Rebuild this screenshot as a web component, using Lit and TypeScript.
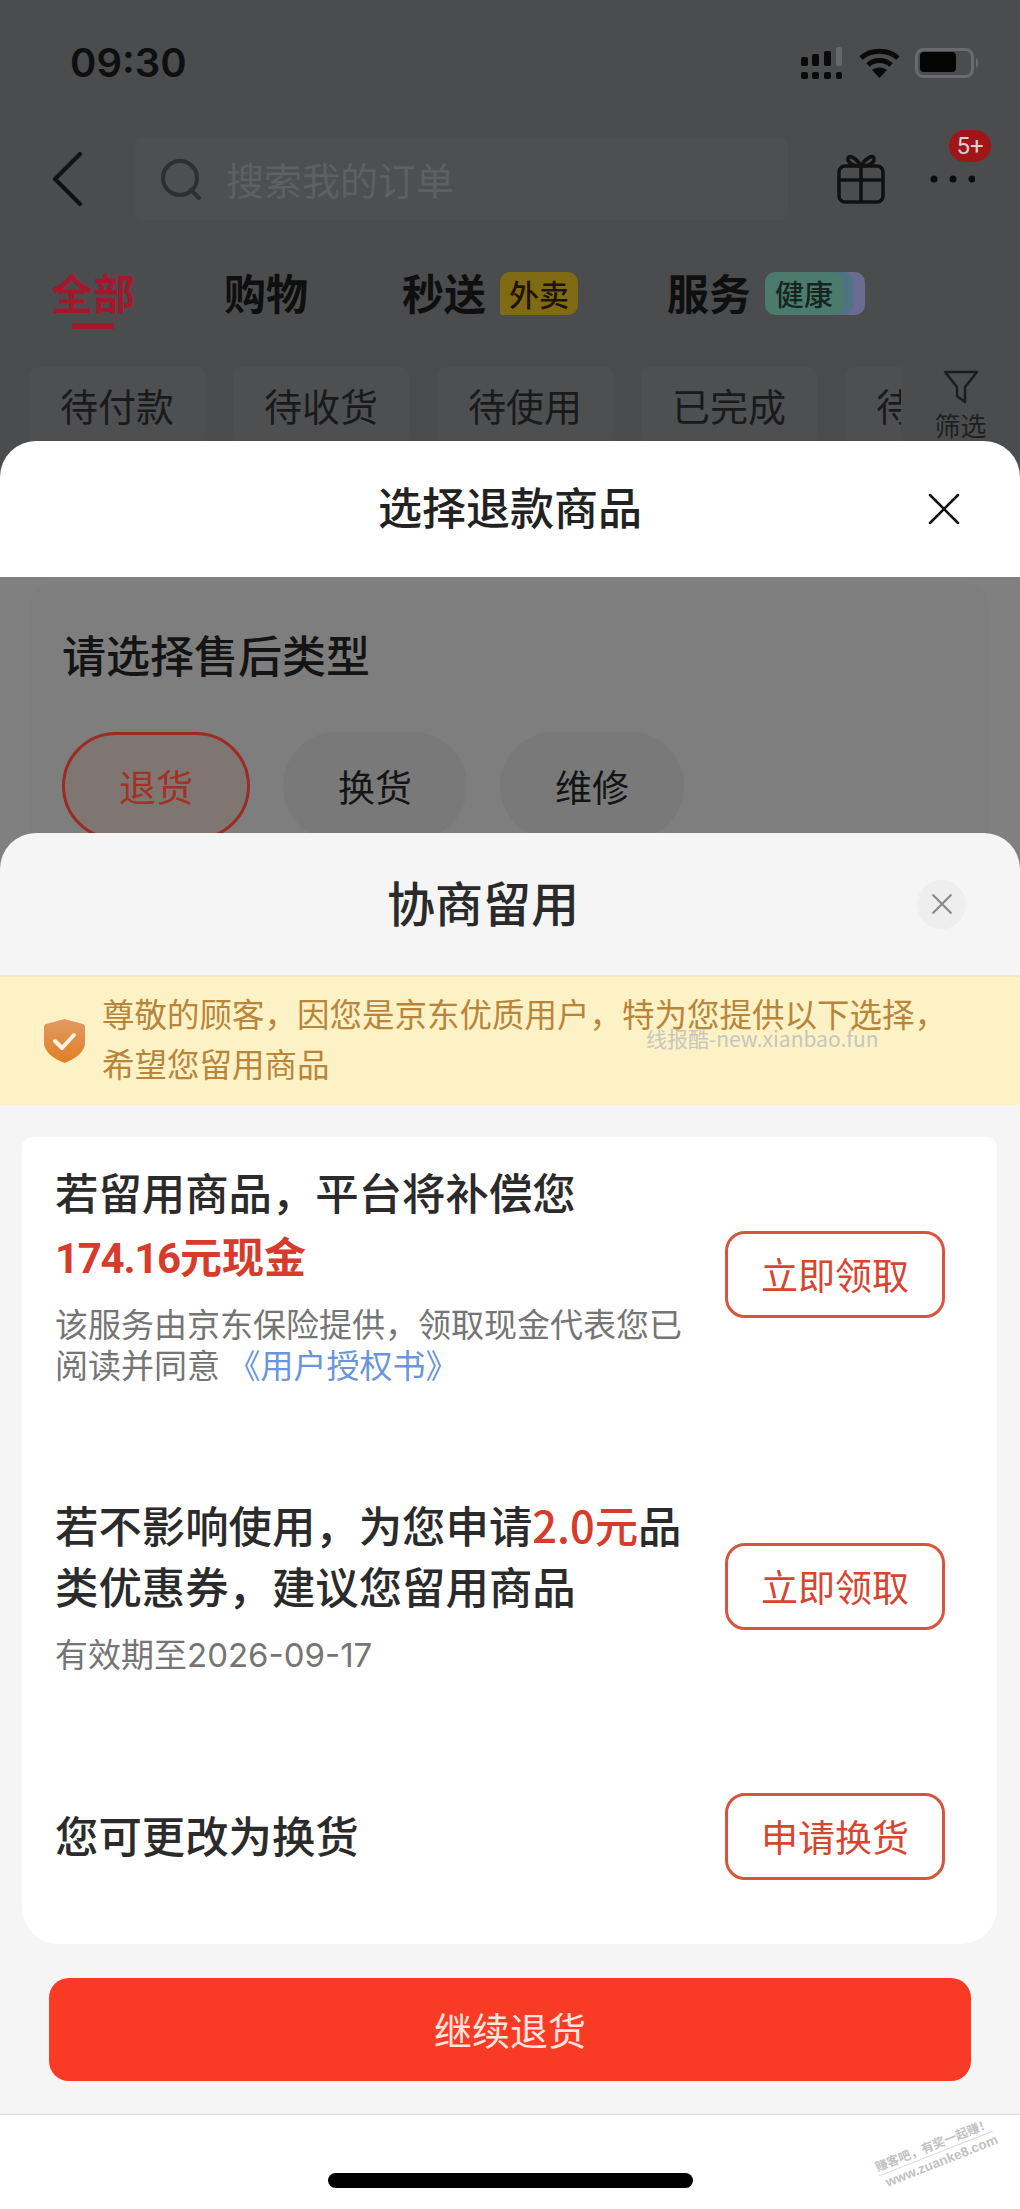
import { LitElement, html, css } from 'lit';
import { customElement } from 'lit/decorators.js';

const closeIcon = (size: number, stroke: string, width: number) => html`
  <svg width=${size} height=${size} viewBox="0 0 32 32" fill="none" stroke=${stroke} stroke-width=${width} stroke-linecap="round">
    <path d="M2 2 L30 30 M30 2 L2 30"></path>
  </svg>
`;

@customElement('app-root')
export class AppRoot extends LitElement {
  static styles = css`
    :host {
      display: block;
      width: 1020px;
      height: 2209px;
      overflow: hidden;
      background: #fff;
      font-family: "Noto Sans CJK SC", "Liberation Sans", sans-serif;
      color: #2b2b2b;
    }

    /* dimmed order list behind the sheets */
    .behind {
      height: 477px;
      overflow: hidden;
      background: #4b4c4e;
      color: #0f0f0f;
    }
    .status {
      display: flex;
      align-items: center;
      height: 38px;
      padding: 44px 39px 0 70px;
    }
    .time {
      font: 600 40px/38px Inter, sans-serif;
    }
    .status-icons {
      margin-left: auto;
      display: flex;
      align-items: center;
      gap: 15px;
    }
    .nav {
      display: flex;
      align-items: center;
      height: 82px;
      margin-top: 56px;
      padding-left: 52px;
    }
    .search {
      display: flex;
      align-items: center;
      gap: 24px;
      width: 654px;
      height: 82px;
      margin-left: 52px;
      padding-left: 26px;
      box-sizing: border-box;
      background: #4e4f51;
      border-radius: 8px;
      color: #5f6062;
      font-size: 38px;
      line-height: 50px;
    }
    .gift {
      margin-left: 49px;
    }
    .more {
      position: relative;
      margin-left: 44px;
      display: flex;
    }
    .badge {
      position: absolute;
      left: 20px;
      top: -44px;
      width: 42px;
      height: 32px;
      border-radius: 16px;
      background: #a01518;
      color: #d8d0d0;
      font: 24px/32px Roboto, sans-serif;
      text-align: center;
    }
    .tabs {
      display: flex;
      gap: 89px;
      height: 60px;
      margin-top: 50px;
      padding-left: 51px;
      font-size: 42px;
      font-weight: 700;
      line-height: 44px;
    }
    .tab {
      display: flex;
      align-items: flex-start;
    }
    .tab.shift {
      margin-left: 5px;
    }
    .tab.active {
      flex-direction: column;
      align-items: center;
      color: #a3182c;
    }
    .tab.active::after {
      content: "";
      width: 42px;
      height: 6px;
      margin-top: 9px;
      background: #a3182c;
    }
    .tag {
      height: 43px;
      margin-left: 14px;
      margin-top: 2px;
      border-radius: 10px 10px 10px 2px;
      font-size: 30px;
      line-height: 43px;
      font-weight: 500;
      text-align: center;
    }
    .tag.food {
      width: 78px;
      background: #806b14;
      color: #20140a;
    }
    .tag.health {
      width: 78px;
      background: #4c7a6c;
      color: #14261f;
      box-shadow: 10px 0 0 #4d7385, 22px 0 0 #6b6a90;
      border-radius: 10px;
      font-size: 29px;
    }
    .chips-wrap {
      position: relative;
      margin-top: 37px;
    }
    .chips {
      display: flex;
      gap: 28px;
      padding-left: 29px;
      overflow: hidden;
    }
    .chip {
      flex: none;
      width: 176px;
      height: 76px;
      background: #4e4f51;
      border-radius: 8px;
      font-size: 38px;
      line-height: 76px;
      padding-left: 31px;
      box-sizing: border-box;
      color: #1a1a1a;
      white-space: nowrap;
    }
    .filter {
      position: absolute;
      right: 0;
      top: 0;
      width: 119px;
      height: 90px;
      background: #4b4c4e;
      display: flex;
      flex-direction: column;
      align-items: center;
      color: #1f1f1f;
      font-size: 26px;
      line-height: 30px;
      padding-top: 3px;
      gap: 6px;
      box-sizing: border-box;
    }

    /* first sheet */
    .sheet {
      position: relative;
      margin-top: -36px;
      border-radius: 36px 36px 0 0;
    }
    .sheet-head {
      display: grid;
      grid-template-columns: 1fr auto 1fr;
      align-items: center;
      height: 136px;
      background: #fff;
    }
    .sheet-head h1 {
      margin: 0;
      padding-bottom: 6px;
      font-size: 44px;
      line-height: 60px;
      font-weight: 500;
      color: #222;
    }
    .sheet-head .close {
      justify-self: end;
      display: flex;
      margin-right: 60px;
    }
    .types {
      height: 292px;
      overflow: hidden;
      box-sizing: border-box;
      background: #808080;
      padding: 6px 31px 0 29px;
    }
    .types-card {
      height: 400px;
      padding: 45px 33px 0;
      background: #7e7e7e;
      border-radius: 24px;
      box-sizing: border-box;
      color: #141414;
    }
    .types-card h2 {
      margin: 0 0 52px;
      font-size: 44px;
      line-height: 52px;
      font-weight: 500;
    }
    .pills {
      display: flex;
      gap: 33px;
    }
    .pill {
      width: 184px;
      height: 108px;
      border-radius: 54px;
      background: #797979;
      font-size: 37px;
      line-height: 108px;
      text-align: center;
      box-sizing: border-box;
    }
    .pill.on {
      width: 188px;
      line-height: 102px;
      background: #7f7672;
      border: 3px solid #9a2c22;
      color: #a13226;
    }

    /* second sheet */
    .offer {
      background: #f5f5f5;
    }
    .offer-head {
      display: flex;
      align-items: center;
      height: 142px;
      padding: 0 54px 0 387px;
    }
    .offer-head h1 {
      margin: 0;
      padding-bottom: 6px;
      font-size: 48px;
      line-height: 60px;
      font-weight: 500;
      color: #2a2a2a;
    }
    .offer-close {
      margin-left: auto;
      width: 49px;
      height: 49px;
      border-radius: 50%;
      background: #eeeeee;
      display: flex;
      align-items: center;
      justify-content: center;
    }
    .notice {
      position: relative;
      display: flex;
      align-items: center;
      gap: 17px;
      height: 130px;
      padding-left: 44px;
      background: #fdf2c6;
      border-top: 2px solid #f7e8c0;
      box-sizing: border-box;
      color: #b8853a;
      font-size: 32.5px;
      line-height: 50px;
    }
    .notice-text {
      white-space: nowrap;
      padding-bottom: 7px;
    }
    .mark {
      position: absolute;
      left: 646px;
      top: 46px;
      color: #c8c6bc;
      font: 21px/30px "Noto Sans CJK SC", sans-serif;
      white-space: nowrap;
    }
    .card {
      margin: 32px 23px 0 22px;
      height: 807px;
      padding: 25px 52px 0 33px;
      box-sizing: border-box;
      background: #fff;
      border-radius: 10px 10px 36px 36px;
      display: flex;
      flex-direction: column;
    }
    .row {
      display: flex;
      align-items: center;
      justify-content: space-between;
    }
    .row + .row {
      margin-top: 109px;
    }
    .row.last {
      margin-top: 117px;
    }
    .row-text {
      margin: -2px 0 2px;
    }
    .row-title {
      font-size: 43.4px;
      line-height: 63px;
      font-weight: 500;
      white-space: nowrap;
    }
    .row-title.tight {
      line-height: 61px;
    }
    .red {
      color: #d63b2b;
    }
    .amount {
      font-size: 42px;
      line-height: 63px;
      font-weight: 700;
    }
    .money {
      font-family: Roboto, sans-serif;
      letter-spacing: -1.3px;
      line-height: 1;
    }
    .sub {
      margin-top: 17px;
      color: #757575;
      font-size: 33px;
      line-height: 41px;
      white-space: nowrap;
    }
    .date {
      font-family: Inter, sans-serif;
      line-height: 1;
    }
    .link {
      color: #6a95d8;
    }
    .btn {
      flex: none;
      width: 220px;
      height: 87px;
      border: 3px solid #d9533f;
      border-radius: 20px;
      box-sizing: border-box;
      background: #fff;
      color: #d9442f;
      font-size: 37px;
      line-height: 81px;
      text-align: center;
    }
    .continue {
      margin: 34px 49px 0;
      height: 103px;
      border-radius: 20px;
      background: #f93b26;
      color: #fde4dc;
      font-size: 38px;
      line-height: 101px;
      text-align: center;
    }
    .offer-bottom {
      height: 33px;
    }
    .footer {
      position: relative;
      height: 92px;
      padding-top: 58px;
      background: #fff;
      border-top: 1px solid #dcdcdc;
    }
    .home {
      width: 365px;
      height: 15px;
      margin-left: 328px;
      border-radius: 8px;
      background: #000;
    }
    .stamp {
      position: absolute;
      left: 875px;
      top: 21px;
      width: 122px;
      color: #c2c2c2;
      transform: rotate(-21.5deg);
      white-space: nowrap;
    }
    .stamp-top {
      font-size: 12.3px;
      line-height: 17px;
      font-weight: 700;
      border-bottom: 1px solid #d8d8d8;
    }
    .stamp-bottom {
      font: 700 13.5px/18px "Liberation Sans", sans-serif;
      padding-left: 4px;
    }
  `;

  private statusIcons() {
    return html`
      <svg width="44" height="32" viewBox="0 0 44 32" fill="#0a0a0a">
        <rect x="1" y="10" width="7" height="9" rx="2"></rect>
        <rect x="12" y="7" width="7" height="12" rx="2"></rect>
        <rect x="24" y="4" width="7" height="15" rx="2"></rect>
        <rect x="36" y="0" width="6" height="19" rx="2" fill="#66676a"></rect>
        <rect x="1" y="25" width="7" height="7" rx="2"></rect>
        <rect x="12" y="25" width="7" height="7" rx="2"></rect>
        <rect x="24" y="25" width="7" height="7" rx="2"></rect>
        <rect x="36" y="25" width="6" height="7" rx="2"></rect>
      </svg>
      <svg width="41" height="30" viewBox="0 0 41 30" fill="none" stroke="#0a0a0a" stroke-width="5">
        <path d="M2 10 C12 1 29 1 39 10"></path>
        <path d="M9 17 C15 11 26 11 32 17"></path>
        <path d="M20.5 30 L13 22 C17 18.500 24 18.500 28 22 Z" fill="#0a0a0a" stroke="none"></path>
      </svg>
      <svg width="66" height="30" viewBox="0 0 66 30">
        <rect x="1.500" y="1.500" width="56" height="27" rx="7" fill="none" stroke="#6a6b6e" stroke-width="3"></rect>
        <rect x="5" y="4" width="36" height="20" rx="4" fill="#050505"></rect>
        <path d="M61 10 C64 11 64 19 61 20 Z" fill="#6a6b6e"></path>
      </svg>
    `;
  }

  private behind() {
    return html`
      <div class="behind">
        <div class="status">
          <div class="time">09:30</div>
          <div class="status-icons">${this.statusIcons()}</div>
        </div>
        <div class="nav">
          <svg width="30" height="54" viewBox="0 0 30 54" fill="none" stroke="#111" stroke-width="4" stroke-linecap="round" stroke-linejoin="round">
            <path d="M28 2 L3 27 L28 52"></path>
          </svg>
          <div class="search">
            <svg width="42" height="42" viewBox="0 0 42 42" fill="none" stroke="#2e2f30" stroke-width="4" stroke-linecap="round">
              <circle cx="20" cy="20" r="17"></circle>
              <path d="M31 32 L39 40"></path>
            </svg>
            <span>搜索我的订单</span>
          </div>
          <svg class="gift" width="48" height="50" viewBox="0 0 48 50" fill="none" stroke="#111" stroke-width="3.500" stroke-linejoin="round">
            <rect x="2" y="12" width="44" height="36" rx="6"></rect>
            <path d="M2 26 H46 M24 12 V48"></path>
            <path d="M24 12 C18 2 10 0 11 6 C12 10 18 12 24 12 C30 12 36 10 37 6 C38 0 30 2 24 12 Z"></path>
          </svg>
          <div class="more">
            <svg width="46" height="10" viewBox="0 0 46 10" fill="#0c0c0c">
              <circle cx="5" cy="5" r="3.500"></circle>
              <circle cx="24" cy="5" r="3.500"></circle>
              <circle cx="43" cy="5" r="3.500"></circle>
            </svg>
            <div class="badge">5+</div>
          </div>
        </div>
        <div class="tabs">
          <div class="tab active">全部</div>
          <div class="tab">购物</div>
          <div class="tab shift">秒送<div class="tag food">外卖</div></div>
          <div class="tab">服务<div class="tag health">健康</div></div>
        </div>
        <div class="chips-wrap">
          <div class="chips">
            ${['待付款', '待收货', '待使用', '已完成', '待评价'].map((c) => html`<div class="chip">${c}</div>`)}
          </div>
          <div class="filter">
            <svg width="36" height="34" viewBox="0 0 36 34" fill="none" stroke="#1c1c1c" stroke-width="2.500" stroke-linejoin="round">
              <path d="M2 2 H34 L22 17 V32 L14 26 V17 Z"></path>
            </svg>
            <span>筛选</span>
          </div>
        </div>
      </div>
    `;
  }

  private types() {
    return html`
      <div class="sheet sheet-head">
        <span></span>
        <h1>选择退款商品</h1>
        <div class="close">${closeIcon(32, '#111', 2.5)}</div>
      </div>
      <div class="types">
        <div class="types-card">
          <h2>请选择售后类型</h2>
          <div class="pills">
            <div class="pill on">退货</div>
            <div class="pill">换货</div>
            <div class="pill">维修</div>
          </div>
        </div>
      </div>
    `;
  }

  private offer() {
    return html`
      <div class="sheet offer">
        <div class="offer-head">
          <h1>协商留用</h1>
          <div class="offer-close">${closeIcon(20, '#8a8a8a', 3.5)}</div>
        </div>
        <div class="notice">
          <svg width="41" height="44" viewBox="0 0 41 44">
            <defs>
              <linearGradient id="shield" x1="0" y1="0" x2="0" y2="1">
                <stop offset="0" stop-color="#e39a63"></stop>
                <stop offset="1" stop-color="#df7f24"></stop>
              </linearGradient>
            </defs>
            <path d="M20.500 0 L39 5 C40.500 5.500 41 6.500 41 8 V24 C41 33 31 40 20.500 44 C10 40 0 33 0 24 V8 C0 6.500 .5 5.500 2 5 Z" fill="url(#shield)"></path>
            <path d="M11 22 L18 29 L30 16" fill="none" stroke="#fdf3e4" stroke-width="4" stroke-linecap="round" stroke-linejoin="round"></path>
          </svg>
          <div class="notice-text">尊敬的顾客，因您是京东优质用户，特为您提供以下选择，<br />希望您留用商品</div>
          <div class="mark">线报酷-new.xianbao.fun</div>
        </div>
        <div class="card">
          <div class="row">
            <div class="row-text">
              <div class="row-title">若留用商品，平台将补偿您</div>
              <div class="amount red"><span class="money">174.16</span>元现金</div>
              <div class="sub">该服务由京东保险提供，领取现金代表您已<br />阅读并同意 <span class="link">《用户授权书》</span></div>
            </div>
            <div class="btn">立即领取</div>
          </div>
          <div class="row">
            <div class="row-text">
              <div class="row-title tight">若不影响使用，为您申请<span class="red">2.0元</span>品<br />类优惠券，建议您留用商品</div>
              <div class="sub">有效期至<span class="date">2026-09-17</span></div>
            </div>
            <div class="btn">立即领取</div>
          </div>
          <div class="row last">
            <div class="row-text row-title">您可更改为换货</div>
            <div class="btn">申请换货</div>
          </div>
        </div>
        <div class="continue">继续退货</div>
        <div class="offer-bottom"></div>
      </div>
      <div class="footer">
        <div class="home"></div>
        <div class="stamp">
          <div class="stamp-top">赚客吧，有奖一起赚！</div>
          <div class="stamp-bottom">www.zuanke8.com</div>
        </div>
      </div>
    `;
  }

  render() {
    return html`${this.behind()}${this.types()}${this.offer()}`;
  }
}
